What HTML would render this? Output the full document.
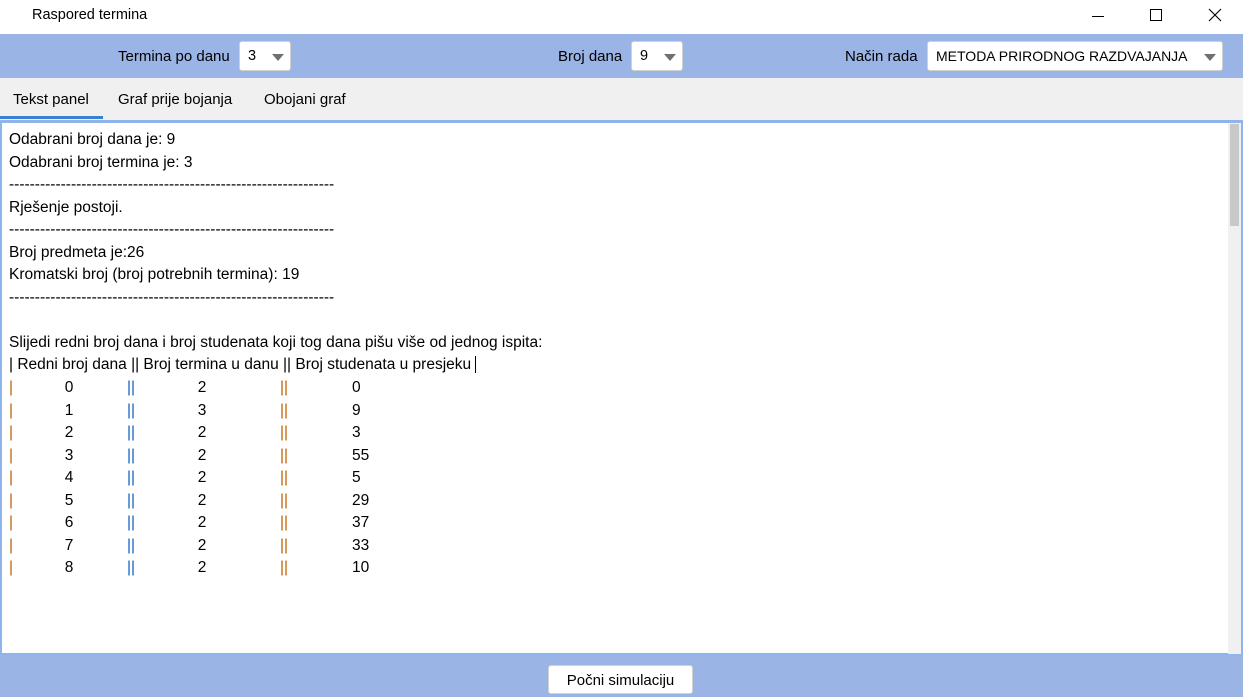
<!DOCTYPE html><html><head><meta charset="utf-8"><style>
*{margin:0;padding:0;box-sizing:border-box}
body{width:1243px;height:697px;position:relative;overflow:hidden;background:#fff;font-family:"Liberation Sans",sans-serif;font-size:14.5px;color:#000}
.a{position:absolute;white-space:pre}
.t{font-size:15.5px;line-height:22.5px}
.sel{position:absolute;background:#fff;border:1px solid #d0d0d0;border-radius:3px;height:30px;top:41px}
.sel span{position:absolute;left:8px;top:6px}
.tri{position:absolute;top:12px;width:0;height:0;border-left:6px solid transparent;border-right:6px solid transparent;border-top:7px solid #707070}
.o{color:#c06000}.b{color:#1060c0}
</style></head><body>
<div class="a" style="left:32px;top:7px">Raspored termina</div>
<div class="a" style="left:1092px;top:16px;width:12px;height:1px;background:#000"></div>
<div class="a" style="left:1150px;top:9px;width:12px;height:12px;border:1px solid #000"></div>
<svg class="a" style="left:1208px;top:8px" width="14" height="14"><path d="M1 1L13 13M13 1L1 13" stroke="#000" stroke-width="1.1"/></svg>
<div class="a" style="left:0;top:34px;width:1243px;height:44px;background:#9ab4e6"></div>
<div class="a" style="left:118px;top:48px;font-size:15px">Termina po danu</div>
<div class="sel" style="left:239px;width:52px"><span>3</span><div class="tri" style="left:32px"></div></div>
<div class="a" style="left:558px;top:48px;font-size:15px">Broj dana</div>
<div class="sel" style="left:631px;width:52px"><span>9</span><div class="tri" style="left:32px"></div></div>
<div class="a" style="left:845px;top:48px;font-size:15px">Način rada</div>
<div class="sel" style="left:927px;width:296px"><span style="font-size:14px">METODA PRIRODNOG RAZDVAJANJA</span><div class="tri" style="left:276px"></div></div>
<div class="a" style="left:0;top:78px;width:1243px;height:43px;background:#f0f0f0"></div>
<div class="a" style="left:13px;top:91px;font-size:15px">Tekst panel</div>
<div class="a" style="left:118px;top:91px;font-size:15px">Graf prije bojanja</div>
<div class="a" style="left:264px;top:91px;font-size:15px">Obojani graf</div>
<div class="a" style="left:0;top:116px;width:103px;height:3px;background:#3c7fd0"></div>
<div class="a" style="left:0;top:120px;width:1243px;height:535px;border:2px solid #8fb4ec;border-top-width:3px;background:#fff"></div>
<div class="a" style="left:1228px;top:123px;width:13px;height:531px;background:#f0f0f0"></div>
<div class="a" style="left:1230px;top:124px;width:9px;height:102px;background:#c8c8c8"></div>
<div class="a t" style="left:9px;top:129px">Odabrani broj dana je: 9
Odabrani broj termina je: 3
---------------------------------------------------------------
Rješenje postoji.
---------------------------------------------------------------
Broj predmeta je:26
Kromatski broj (broj potrebnih termina): 19
---------------------------------------------------------------

Slijedi redni broj dana i broj studenata koji tog dana pišu više od jednog ispita:
| Redni broj dana || Broj termina u danu || Broj studenata u presjeku <span style="border-left:1.5px solid #000"></span></div>
<div class="a t o" style="left:9px;top:377px">|
|
|
|
|
|
|
|
|</div>
<div class="a t b" style="left:127px;top:377px">||
||
||
||
||
||
||
||
||</div>
<div class="a t o" style="left:280px;top:377px">||
||
||
||
||
||
||
||
||</div>
<div class="a t" style="left:59px;width:20px;text-align:center;top:377px">0
1
2
3
4
5
6
7
8</div>
<div class="a t" style="left:192px;width:20px;text-align:center;top:377px">2
3
2
2
2
2
2
2
2</div>
<div class="a t" style="left:352px;top:377px">0
9
3
55
5
29
37
33
10</div>
<div class="a" style="left:0;top:655px;width:1243px;height:42px;background:#9ab4e6"></div>
<div class="a" style="left:548px;top:665px;width:145px;height:29px;background:#fff;border:1px solid #d0d0d0;border-radius:3px;text-align:center;line-height:29px;font-size:15px">Počni simulaciju</div>
</body></html>
